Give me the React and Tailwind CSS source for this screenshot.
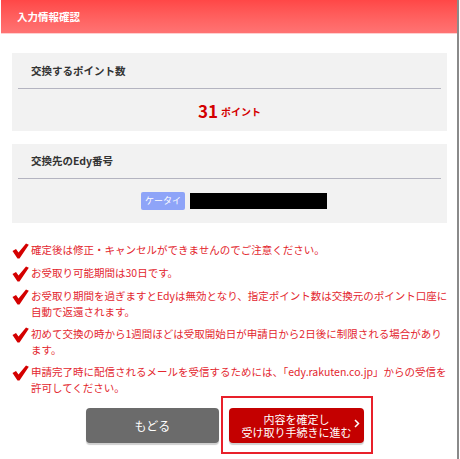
import React from "react";

const notes = [
  "確定後は修正・キャンセルができませんのでご注意ください。",
  "お受取り可能期間は30日です。",
  "お受取り期間を過ぎますとEdyは無効となり、指定ポイント数は交換元のポイント口座に自動で返還されます。",
  "初めて交換の時から1週間ほどは受取開始日が申請日から2日後に制限される場合があります。",
  "申請完了時に配信されるメールを受信するためには、「edy.rakuten.co.jp」からの受信を許可してください。",
];

function Check() {
  return (
    <svg width="17" height="16" viewBox="0 0 17 16" className="shrink-0 mt-[1px]">
      <path d="M0.5 8 L4 6 L6.5 9.5 L14 0.5 L16.8 1.8 L7.5 15.5 L5.5 15.5 Z" fill="#d40000" />
    </svg>
  );
}

export default function App() {
  return (
    <div
      className="w-[460px] h-[459px] bg-white flex overflow-hidden"
      style={{ fontFamily: '"Noto Sans CJK JP", "Noto Sans", sans-serif' }}
    >
      <div className="w-[457px] pl-[1px] flex flex-col">
        {/* Header */}
        <div className="h-[34px] bg-gradient-to-b from-[#ff4747] to-[#ff7373] flex items-center pl-4 border-b border-[#ffd0d0]">
          <span className="text-white font-bold text-[10.5px]">入力情報確認</span>
        </div>

        <div className="pl-[11px]">
          {/* Points box */}
          <div className="mt-[19px] w-[435px] bg-[#f2f2f2]">
            <div className="h-[35px] flex items-center pl-[19px] text-[10.5px] font-bold text-[#333]">
              交換するポイント数
            </div>
            <div className="mx-[6px] h-[1px] bg-[#b4b4c0]" />
            <div className="h-[42px] flex items-center justify-center text-[#d40000] font-bold">
              <span className="text-[17px] leading-none">31</span>
              <span className="text-[10px] ml-[3px] mt-[3px] leading-none">ポイント</span>
            </div>
          </div>

          {/* Edy box */}
          <div className="mt-[13px] w-[435px] bg-[#f2f2f2]">
            <div className="h-[34px] flex items-center pl-[19px] text-[10.5px] font-bold text-[#333]">
              交換先のEdy番号
            </div>
            <div className="mx-[6px] h-[1px] bg-[#b4b4c0]" />
            <div className="pt-[13px] pb-[13px] flex items-center justify-center gap-[5px] pl-[9px]">
              <span className="w-[44px] h-[18px] rounded-[2px] bg-[#8ea4f8] text-white text-[9px] flex items-center justify-center">
                ケータイ
              </span>
              <span className="w-[137px] h-[16px] bg-black" />
            </div>
          </div>

          {/* Notes */}
          <ul className="mt-[19px] flex flex-col gap-[6px] w-[436px]">
            {notes.map((n) => (
              <li key={n} className="flex gap-[2px]">
                <Check />
                <span className="text-[10.5px] leading-[16px] text-[#e3262e]">{n}</span>
              </li>
            ))}
          </ul>

          {/* Buttons */}
          <div className="mt-[12px] ml-[74px] flex gap-[10px]">
            <div className="w-[133px] h-[35px] rounded-[4px] bg-[#6b6b6b] shadow-[0_2px_1px_#cfcfcf] flex items-center justify-center text-white text-[12px]">
              もどる
            </div>
            <div className="relative">
              <div className="absolute -left-[8px] -right-[9px] -top-[12px] -bottom-[11px] border-[2px] border-[#e8202a]" />
              <div className="relative w-[135px] h-[35px] rounded-[4px] bg-[#c40000] shadow-[0_2px_1px_#cfcfcf] flex items-center justify-center text-white text-[11px] leading-[13px] text-center">
                <span>
                  内容を確定し
                  <br />
                  受け取り手続きに進む
                </span>
                <svg width="6" height="9" viewBox="0 0 6 9" className="absolute right-[4px] top-[11px]">
                  <path d="M1 1 L4.5 4.5 L1 8" stroke="white" strokeWidth="1.5" fill="none" />
                </svg>
              </div>
            </div>
          </div>
        </div>
      </div>
      <div className="w-[2px] bg-[#8a8a8a]" />
      <div className="w-[1px] bg-white" />
    </div>
  );
}
